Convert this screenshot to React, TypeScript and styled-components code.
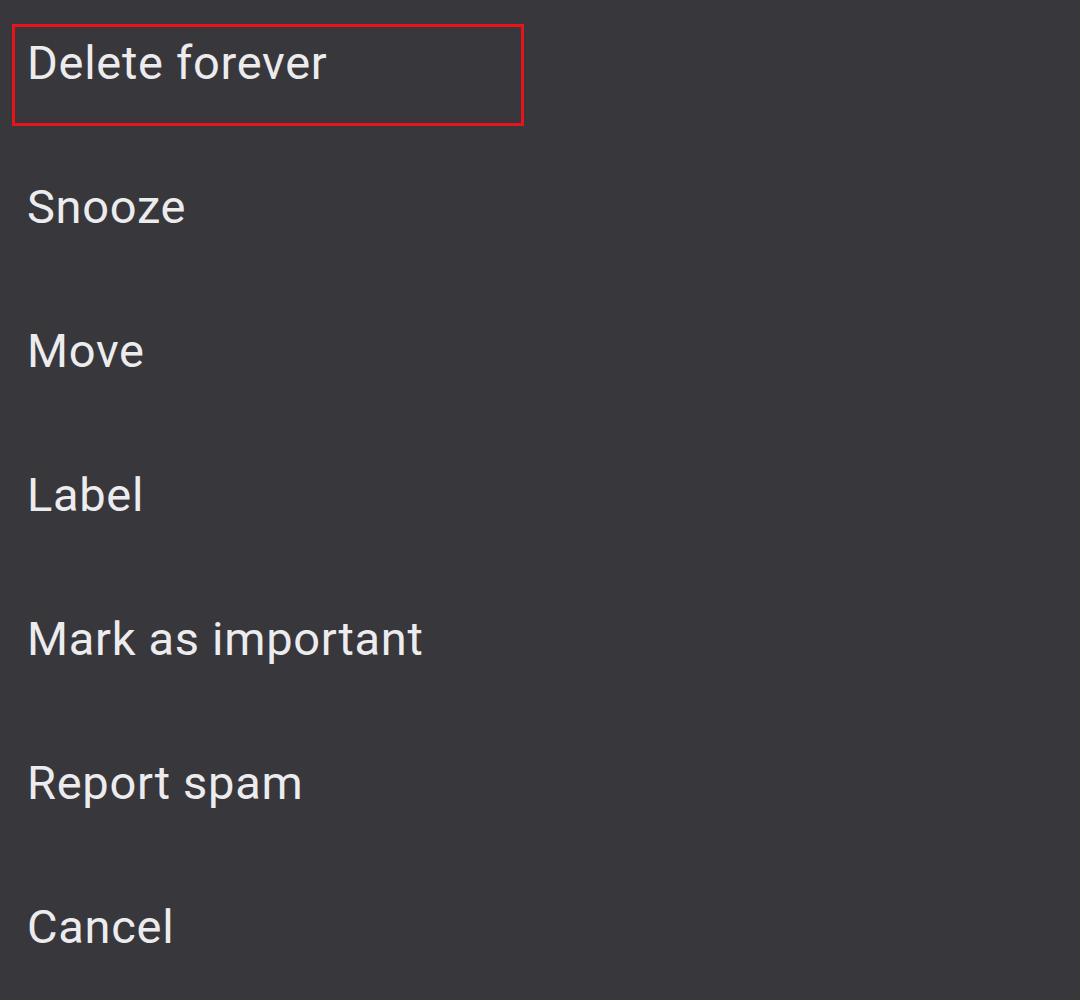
import styled, { createGlobalStyle } from 'styled-components'

const GlobalStyle = createGlobalStyle`
    html, body {
        margin: 0;
        padding: 0;
        background: #38373c;
    }
`

const Sheet = styled.div`
    width: 1080px;
    height: 1000px;
    box-sizing: border-box;
    background: #38373c;
    padding: 24px 0 0 12px;
    display: flex;
    flex-direction: column;
    gap: 42px;
    overflow: hidden;
`

const Item = styled.div<{ $marked?: boolean }>`
    width: 512px;
    height: 102px;
    box-sizing: border-box;
    border: 3px solid ${(p) => (p.$marked ? '#e8141c' : 'transparent')};
    padding: 8px 0 0 12px;
    font-family: Roboto, "Liberation Sans", sans-serif;
    font-size: 47px;
    letter-spacing: 0.7px;
    line-height: normal;
    color: #ececef;
    white-space: nowrap;
`

const actions = [
    'Delete forever',
    'Snooze',
    'Move',
    'Label',
    'Mark as important',
    'Report spam',
    'Cancel',
]

export default function App() {
    return (
        <>
            <GlobalStyle />
            <Sheet>
                {actions.map((label, i) => (
                    <Item key={label} $marked={i === 0}>
                        {label}
                    </Item>
                ))}
            </Sheet>
        </>
    )
}
